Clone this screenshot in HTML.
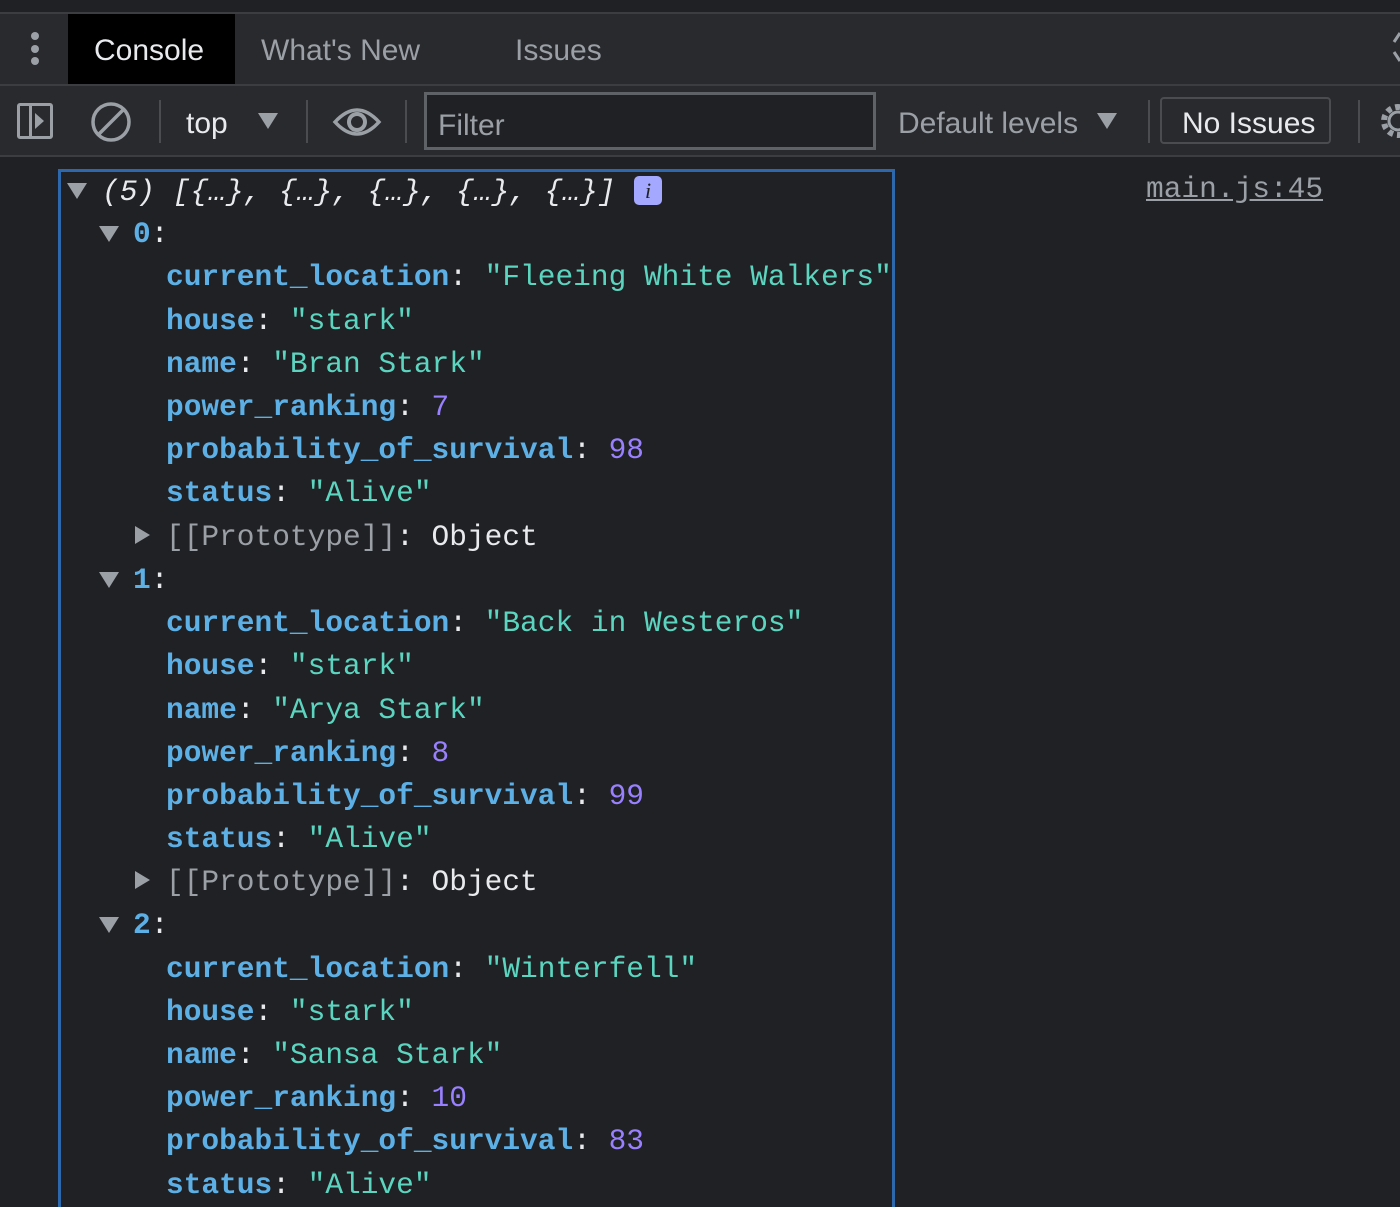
<!DOCTYPE html>
<html style="overflow:hidden;height:1207px"><head><meta charset="utf-8"><style>
*{margin:0;padding:0;box-sizing:border-box}
body{width:1400px;height:1207px;background:#202124;overflow:hidden;position:relative;font-family:"Liberation Sans",sans-serif}
.a{position:absolute}
.ln{position:absolute;height:44px;line-height:44px;font-family:"Liberation Mono",monospace;font-size:29.5px;white-space:pre;color:#e8eaed}
.k{color:#5db0e6;font-weight:bold}
.s{color:#5cd5c0}
.n{color:#9980ff}
.g{color:#9aa0a6}
.tri{position:absolute;width:0;height:0}
.down{border-left:10px solid transparent;border-right:10px solid transparent;border-top:16px solid #9aa0a6}
.right{border-top:9px solid transparent;border-bottom:9px solid transparent;border-left:15px solid #9aa0a6}
.ui{position:absolute;font-size:30px;color:#9aa0a6;line-height:40px}
</style></head><body>
<div class="a" style="left:0;top:0;width:1400px;height:12px;background:#202124"></div>
<div class="a" style="left:0;top:12px;width:1400px;height:2px;background:#3c3d40"></div>
<div class="a" style="left:0;top:14px;width:1400px;height:71px;background:#292a2d"></div>
<div class="a" style="left:0;top:84px;width:1400px;height:2px;background:#3c3d40"></div>
<div class="a" style="left:0;top:86px;width:1400px;height:70px;background:#292a2d"></div>
<div class="a" style="left:0;top:155px;width:1400px;height:2px;background:#3c3d40"></div>
<div class="a" style="left:31px;top:32px;width:8px;height:8px;border-radius:50%;background:#9aa0a6"></div>
<div class="a" style="left:31px;top:45px;width:8px;height:8px;border-radius:50%;background:#9aa0a6"></div>
<div class="a" style="left:31px;top:57px;width:8px;height:8px;border-radius:50%;background:#9aa0a6"></div>
<div class="a" style="left:68px;top:14px;width:167px;height:70px;background:#000"></div>
<div class="ui" style="left:94px;top:31px;color:#e8eaed">Console</div>
<div class="ui" style="left:261px;top:31px">What's New</div>
<div class="ui" style="left:515px;top:31px">Issues</div>
<svg class="a" style="left:1392px;top:30px" width="8" height="34"><path d="M8 3 L2 12" stroke="#9aa0a6" stroke-width="3" fill="none"/><path d="M2 22 L8 31" stroke="#9aa0a6" stroke-width="3" fill="none"/></svg>
<div class="a" style="left:17px;top:103px;width:36px;height:36px;border:3px solid #9aa0a6;border-radius:3px"></div>
<div class="a" style="left:29px;top:103px;width:3px;height:36px;background:#9aa0a6"></div>
<div class="tri" style="left:35px;top:113px;border-top:8px solid transparent;border-bottom:8px solid transparent;border-left:9px solid #9aa0a6"></div>
<svg class="a" style="left:89px;top:100px" width="44" height="44"><circle cx="22" cy="22" r="18" fill="none" stroke="#9aa0a6" stroke-width="3.5"/><line x1="9" y1="35" x2="35" y2="9" stroke="#9aa0a6" stroke-width="3.5"/></svg>
<div class="a" style="left:159px;top:100px;width:2px;height:43px;background:#4a4c50"></div>
<div class="ui" style="left:186px;top:104px;color:#e8eaed">top</div>
<div class="tri" style="left:258px;top:113px;border-left:10px solid transparent;border-right:10px solid transparent;border-top:16px solid #9aa0a6"></div>
<div class="a" style="left:306px;top:100px;width:2px;height:43px;background:#4a4c50"></div>
<svg class="a" style="left:332px;top:102px" width="50" height="40"><path d="M3 20 Q25 -4 47 20 Q25 44 3 20Z" fill="none" stroke="#9aa0a6" stroke-width="3.5"/><circle cx="25" cy="20" r="8" fill="none" stroke="#9aa0a6" stroke-width="4"/></svg>
<div class="a" style="left:405px;top:100px;width:2px;height:43px;background:#4a4c50"></div>
<div class="a" style="left:424px;top:92px;width:452px;height:58px;border:3px solid #5f6368;background:#202124"></div>
<div class="ui" style="left:438px;top:106px">Filter</div>
<div class="ui" style="left:898px;top:104px">Default levels</div>
<div class="tri" style="left:1097px;top:113px;border-left:10px solid transparent;border-right:10px solid transparent;border-top:16px solid #9aa0a6"></div>
<div class="a" style="left:1148px;top:100px;width:2px;height:43px;background:#4a4c50"></div>
<div class="a" style="left:1160px;top:97px;width:171px;height:47px;border:2px solid #4a4c50;border-radius:4px"></div>
<div class="ui" style="left:1182px;top:104px;color:#e8eaed">No Issues</div>
<div class="a" style="left:1358px;top:100px;width:2px;height:43px;background:#4a4c50"></div>
<svg class="a" style="left:1376px;top:98px" width="30" height="46"><circle cx="22" cy="23" r="14" fill="none" stroke="#9aa0a6" stroke-width="6" stroke-dasharray="5 4"/><circle cx="22" cy="23" r="9" fill="none" stroke="#9aa0a6" stroke-width="3"/></svg>
<div class="a" style="left:58px;top:169px;width:837px;height:1060px;border:3px solid #2e68ac"></div>
<div class="ln" style="left:1146px;top:167px;color:#9aa0a6;text-decoration:underline;font-size:29.5px">main.js:45</div>
<div class="tri down" style="left:67px;top:183px"></div>
<div class="ln" style="left:102px;top:170px;font-style:italic">(5) [{…}, {…}, {…}, {…}, {…}]</div>
<div class="a" style="left:634px;top:176px;width:28px;height:29px;border-radius:5px;background:#a4a8ff;color:#202124;font:italic 22px 'Liberation Serif',serif;text-align:center;line-height:29px">i</div>

<div class="tri down" style="left:99px;top:226px"></div>
<div class="ln" style="left:133px;top:212px"><span class="k">0</span>:</div>
<div class="ln" style="left:166px;top:255px"><span class="k">current_location</span>: <span class="s">"Fleeing White Walkers"</span></div>
<div class="ln" style="left:166px;top:299px"><span class="k">house</span>: <span class="s">"stark"</span></div>
<div class="ln" style="left:166px;top:342px"><span class="k">name</span>: <span class="s">"Bran Stark"</span></div>
<div class="ln" style="left:166px;top:385px"><span class="k">power_ranking</span>: <span class="n">7</span></div>
<div class="ln" style="left:166px;top:428px"><span class="k">probability_of_survival</span>: <span class="n">98</span></div>
<div class="ln" style="left:166px;top:471px"><span class="k">status</span>: <span class="s">"Alive"</span></div>
<div class="tri right" style="left:135px;top:526px"></div>
<div class="ln" style="left:166px;top:515px"><span class="g">[[Prototype]]</span>: Object</div>

<div class="tri down" style="left:99px;top:572px"></div>
<div class="ln" style="left:133px;top:558px"><span class="k">1</span>:</div>
<div class="ln" style="left:166px;top:601px"><span class="k">current_location</span>: <span class="s">"Back in Westeros"</span></div>
<div class="ln" style="left:166px;top:644px"><span class="k">house</span>: <span class="s">"stark"</span></div>
<div class="ln" style="left:166px;top:688px"><span class="k">name</span>: <span class="s">"Arya Stark"</span></div>
<div class="ln" style="left:166px;top:731px"><span class="k">power_ranking</span>: <span class="n">8</span></div>
<div class="ln" style="left:166px;top:774px"><span class="k">probability_of_survival</span>: <span class="n">99</span></div>
<div class="ln" style="left:166px;top:817px"><span class="k">status</span>: <span class="s">"Alive"</span></div>
<div class="tri right" style="left:135px;top:871px"></div>
<div class="ln" style="left:166px;top:860px"><span class="g">[[Prototype]]</span>: Object</div>

<div class="tri down" style="left:99px;top:917px"></div>
<div class="ln" style="left:133px;top:903px"><span class="k">2</span>:</div>
<div class="ln" style="left:166px;top:947px"><span class="k">current_location</span>: <span class="s">"Winterfell"</span></div>
<div class="ln" style="left:166px;top:990px"><span class="k">house</span>: <span class="s">"stark"</span></div>
<div class="ln" style="left:166px;top:1033px"><span class="k">name</span>: <span class="s">"Sansa Stark"</span></div>
<div class="ln" style="left:166px;top:1076px"><span class="k">power_ranking</span>: <span class="n">10</span></div>
<div class="ln" style="left:166px;top:1119px"><span class="k">probability_of_survival</span>: <span class="n">83</span></div>
<div class="ln" style="left:166px;top:1163px"><span class="k">status</span>: <span class="s">"Alive"</span></div>
</body></html>
